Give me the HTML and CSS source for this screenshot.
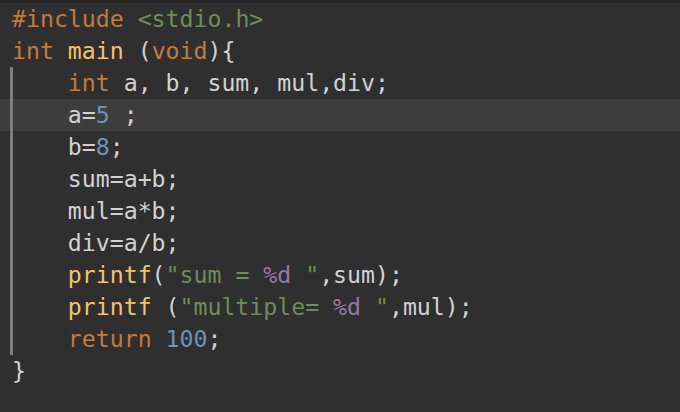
FILE: index.html
```html
<!DOCTYPE html>
<html lang="en">
<head>
<meta charset="utf-8">
<title>main.c</title>
<link rel="stylesheet" href="styles.css">
</head>
<body>
<div class="editor">
  <div class="topbar"></div>
  <div class="code">
    <div class="line"><span class="kw">#include</span> <span class="str">&lt;stdio.h&gt;</span></div>
    <div class="line"><span class="kw">int</span> <span class="fn">main</span> (<span class="kw">void</span>){</div>
    <div class="block">
      <div class="line">    <span class="kw">int</span> a, b, sum, mul,div;</div>
      <div class="line current">    a=<span class="num">5</span> ;</div>
      <div class="line">    b=<span class="num">8</span>;</div>
      <div class="line">    sum=a+b;</div>
      <div class="line">    mul=a*b;</div>
      <div class="line">    div=a/b;</div>
      <div class="line">    <span class="fn">printf</span>(<span class="str">"sum = </span><span class="fmt">%d</span><span class="str"> "</span>,sum);</div>
      <div class="line">    <span class="fn">printf</span> (<span class="str">"multiple= </span><span class="fmt">%d</span><span class="str"> "</span>,mul);</div>
      <div class="line">    <span class="kw">return</span> <span class="num">100</span>;</div>
    </div>
    <div class="line">}</div>
  </div>
</div>
</body>
</html>
```

FILE: styles.css
```css
html, body {
  margin: 0;
  padding: 0;
  background: #2f2f2f;
}

.editor {
  width: 680px;
  height: 412px;
  overflow: hidden;
  background: #2f2f2f;
}

.topbar {
  height: 3px;
  background: #262626;
}

.code {
  font-family: "DejaVu Sans Mono", "Liberation Mono", monospace;
  font-size: 23.2px;
  color: #d2d2d2;
}

.line {
  height: 32px;
  line-height: 32px;
  padding-left: 12px;
  white-space: pre;
}

.line.current {
  background: #3d3d3d;
}

.block {
  position: relative;
}

.block::before {
  content: "";
  position: absolute;
  left: 10px;
  top: 0;
  bottom: 0;
  width: 3px;
  background: #7e7e7e;
}

.kw { color: #c47a3d; }
.fn { color: #f2c46e; }
.str { color: #6f8c5a; }
.num { color: #6a94b9; }
.fmt { color: #9877a9; }
```
